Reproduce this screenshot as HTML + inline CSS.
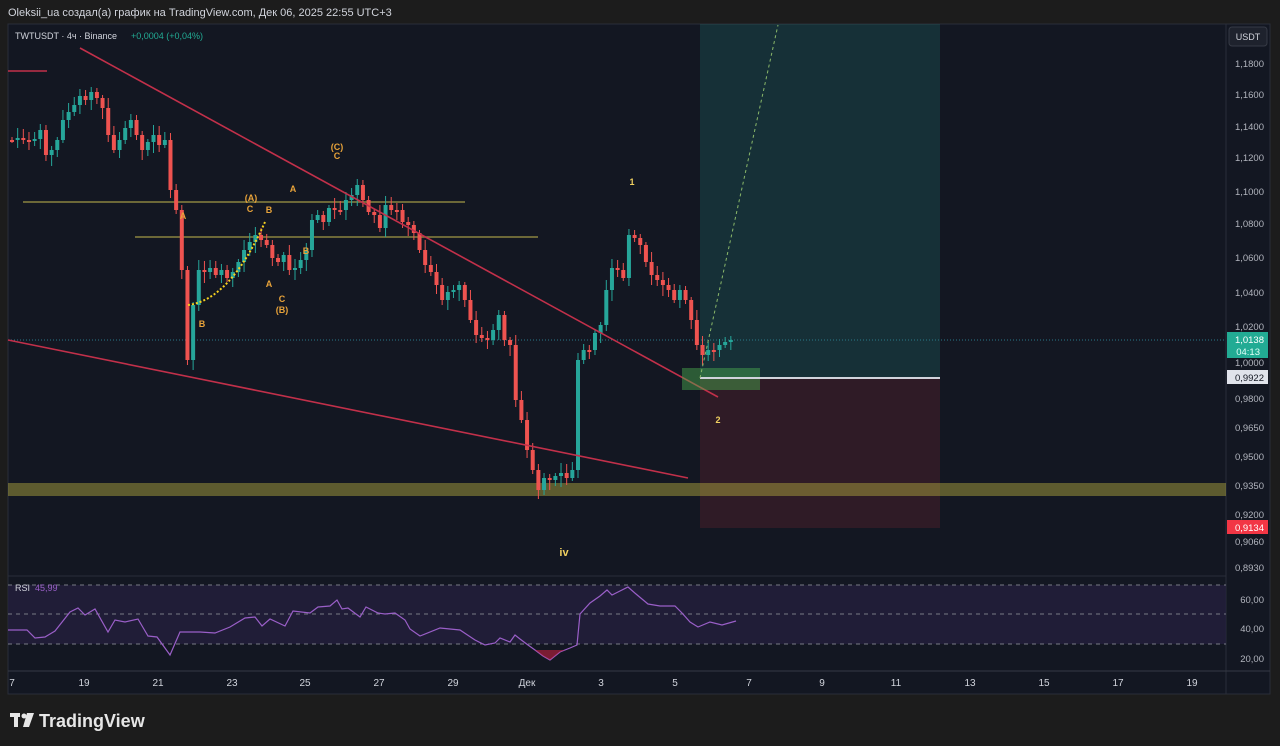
<!DOCTYPE html>
<html><head><meta charset="utf-8"><style>
html,body{margin:0;padding:0;background:#1c1c1c;width:1280px;height:746px;overflow:hidden;font-family:"Liberation Sans","DejaVu Sans",sans-serif}
svg{position:absolute;left:0;top:0}
</style></head><body>
<svg id="s" width="1280" height="746" xmlns="http://www.w3.org/2000/svg" font-family="Liberation Sans, DejaVu Sans, sans-serif">
<rect x="0" y="0" width="1280" height="746" fill="#1c1c1c"/>
<text x="8" y="16" font-size="11" fill="#d1d4dc">Oleksii_ua создал(а) график на TradingView.com, Дек 06, 2025 22:55 UTC+3</text>
<rect x="8" y="24" width="1262" height="670" fill="#131722" stroke="#2a2e39"/>
<line x1="1226" y1="24" x2="1226" y2="694" stroke="#2a2e39"/>
<line x1="8" y1="576" x2="1226" y2="576" stroke="#2a2e39"/>
<line x1="8" y1="671" x2="1270" y2="671" stroke="#363a45"/>
<rect x="700" y="24" width="240" height="354" fill="#26a69a" opacity="0.18"/>
<rect x="700" y="378" width="240" height="150" fill="#f23645" opacity="0.13"/>
<rect x="8" y="483" width="1218" height="13" fill="#b8b040" opacity="0.45"/>
<line x1="23" y1="202" x2="465" y2="202" stroke="#8a8440" stroke-width="1.5"/>
<line x1="135" y1="237" x2="538" y2="237" stroke="#8a8440" stroke-width="1.5"/>
<line x1="8" y1="71" x2="47" y2="71" stroke="#c2304a" stroke-width="1.5"/>
<line x1="8" y1="340" x2="1226" y2="340" stroke="#2a7a8a" stroke-dasharray="1,2"/>
<g id="c"></g>
<line x1="80" y1="48" x2="718" y2="397" stroke="#c2304a" stroke-width="1.6"/>
<line x1="8" y1="340" x2="688" y2="478" stroke="#c2304a" stroke-width="1.6"/>
<rect x="682" y="368" width="78" height="22" fill="#4caf50" opacity="0.45"/>
<line x1="700" y1="378" x2="940" y2="378" stroke="#d1d4dc" stroke-width="2"/>
<line x1="700" y1="378" x2="778" y2="25" stroke="#8ab86a" stroke-dasharray="3,3"/>
<path d="M188 305 Q230 300 265 222" stroke="#f5d020" stroke-width="2" fill="none" stroke-dasharray="2,2"/>
<g font-size="9" fill="#e8a33a" font-weight="bold" text-anchor="middle">
<text x="183" y="219">A</text><text x="202" y="327">B</text><text x="251" y="201">(A)</text><text x="250" y="212">C</text>
<text x="269" y="213">B</text><text x="269" y="287">A</text><text x="282" y="302">C</text><text x="282" y="313">(B)</text>
<text x="293" y="192">A</text><text x="306" y="254">B</text><text x="337" y="150">(C)</text><text x="337" y="159">C</text>
</g>
<g font-size="9" fill="#f0d060" font-weight="bold" text-anchor="middle"><text x="632" y="185">1</text><text x="718" y="423">2</text><text x="564" y="556" font-size="11">iv</text></g>
<rect x="8" y="585" width="1218" height="59" fill="#241f3d" opacity="0.8"/>
<g stroke="#787b86" stroke-dasharray="4,4"><line x1="8" y1="585" x2="1226" y2="585"/><line x1="8" y1="614" x2="1226" y2="614"/><line x1="8" y1="644" x2="1226" y2="644"/></g>
<polyline fill="none" stroke="#9a5fc8" stroke-width="1.2" points="8,630 27,630 35,638 45,637 55,631 70,612 78,608 85,615 95,609 108,632 115,620 125,622 138,619 148,636 157,637 170,655 180,632 190,632 200,632 215,633 230,627 245,618 255,617 262,626 270,619 285,626 293,611 310,613 318,607 330,606 337,600 342,609 348,608 360,617 366,607 378,613 385,614 395,613 405,620 410,629 420,636 440,628 460,630 475,640 485,645 495,643 500,638 510,642 515,635 520,639 528,645 535,650 543,656 550,660 560,652 570,648 577,645 580,614 590,603 600,596 607,590 612,595 620,591 628,587 636,594 648,604 660,606 675,606 682,613 690,622 698,627 710,622 722,625 736,621"/>
<path d="M535 650 L543 656 L550 660 L560 652 L565 650 Z" fill="#c02040" opacity="0.6"/>
<text x="15" y="591" font-size="9" fill="#d1d4dc">RSI</text><text x="35" y="591" font-size="9" fill="#9a5fc8">45,99</text>
<rect x="1229" y="27" width="38" height="19" rx="3" fill="#1e222d" stroke="#363a45"/>
<text x="1248" y="40" font-size="9" fill="#d1d4dc" text-anchor="middle">USDT</text>
<g font-size="9.5" fill="#b2b5be" text-anchor="end">
<text x="1264" y="67">1,1800</text><text x="1264" y="98">1,1600</text><text x="1264" y="130">1,1400</text><text x="1264" y="161">1,1200</text><text x="1264" y="195">1,1000</text><text x="1264" y="227">1,0800</text><text x="1264" y="261">1,0600</text><text x="1264" y="296">1,0400</text><text x="1264" y="330">1,0200</text><text x="1264" y="366">1,0000</text><text x="1264" y="402">0,9800</text><text x="1264" y="431">0,9650</text><text x="1264" y="460">0,9500</text><text x="1264" y="489">0,9350</text><text x="1264" y="518">0,9200</text><text x="1264" y="545">0,9060</text><text x="1264" y="571">0,8930</text>
<text x="1264" y="603">60,00</text><text x="1264" y="632">40,00</text><text x="1264" y="662">20,00</text>
</g>
<rect x="1227" y="332" width="41" height="26" fill="#22ab94"/>
<text x="1264" y="343" font-size="9.5" fill="#fff" text-anchor="end">1,0138</text><text x="1260" y="355" font-size="9.5" fill="#e0fff8" text-anchor="end">04:13</text>
<rect x="1227" y="370" width="41" height="14" fill="#e0e3eb"/><text x="1264" y="381" font-size="9.5" fill="#131722" text-anchor="end">0,9922</text>
<rect x="1227" y="520" width="41" height="14" fill="#f23645"/><text x="1264" y="531" font-size="9.5" fill="#fff" text-anchor="end">0,9134</text>
<g font-size="10" fill="#d1d4dc" text-anchor="middle">
<text x="12" y="686">7</text><text x="84" y="686">19</text><text x="158" y="686">21</text><text x="232" y="686">23</text><text x="305" y="686">25</text><text x="379" y="686">27</text><text x="453" y="686">29</text><text x="527" y="686">Дек</text><text x="601" y="686">3</text><text x="675" y="686">5</text><text x="749" y="686">7</text><text x="822" y="686">9</text><text x="896" y="686">11</text><text x="970" y="686">13</text><text x="1044" y="686">15</text><text x="1118" y="686">17</text><text x="1192" y="686">19</text>
</g>
<g font-size="9" fill="#d1d4dc"><text x="15" y="39">TWTUSDT · 4ч · Binance</text><text x="131" y="39" fill="#22ab94">+0,0004 (+0,04%)</text></g>
<g fill="#e6e6e6"><rect x="10" y="713" width="10" height="4"/><rect x="14" y="713" width="4" height="14"/><circle cx="24" cy="716" r="2.5"/><path d="M27 713 L34 713 L29 727 L23 727 Z"/></g>
<text x="39" y="727" font-size="18" font-weight="bold" fill="#e6e6e6">TradingView</text>
</svg>
<script>
var cl=[140,138,140,141,139,130,155,150,140,120,112,105,96,100,92,98,108,135,150,140,128,120,135,150,142,135,145,140,190,210,270,360,305,270,272,268,275,270,278,272,262,250,242,235,240,245,258,262,255,270,268,260,250,220,215,222,208,210,210,200,195,185,200,212,215,228,205,210,210,222,225,233,250,265,272,285,300,292,290,285,300,320,335,338,340,330,315,340,345,400,420,450,470,490,478,480,476,473,478,470,360,350,350,333,325,290,268,270,278,235,238,245,262,275,280,285,290,300,290,300,320,345,355,350,350,345,342,340];
var g=document.getElementById('c'),h='',x0=10,dx=5.66,p=cl[0];
for(var i=0;i<cl.length;i++){var o=p,c=cl[i],x=x0+i*dx,t=Math.min(o,c),b=Math.max(o,c),up=c<o,col=up?'#26a69a':'#ef5350';
var wt=t-3-((i*7)%8),wb=b+3+((i*5)%9);if(b-t<2){b=t+2;}
h+='<line x1="'+(x+2)+'" y1="'+wt+'" x2="'+(x+2)+'" y2="'+wb+'" stroke="'+col+'"/><rect x="'+x+'" y="'+t+'" width="4" height="'+(b-t)+'" fill="'+col+'"/>';p=c;}
g.innerHTML=h;
</script>
</body></html>
